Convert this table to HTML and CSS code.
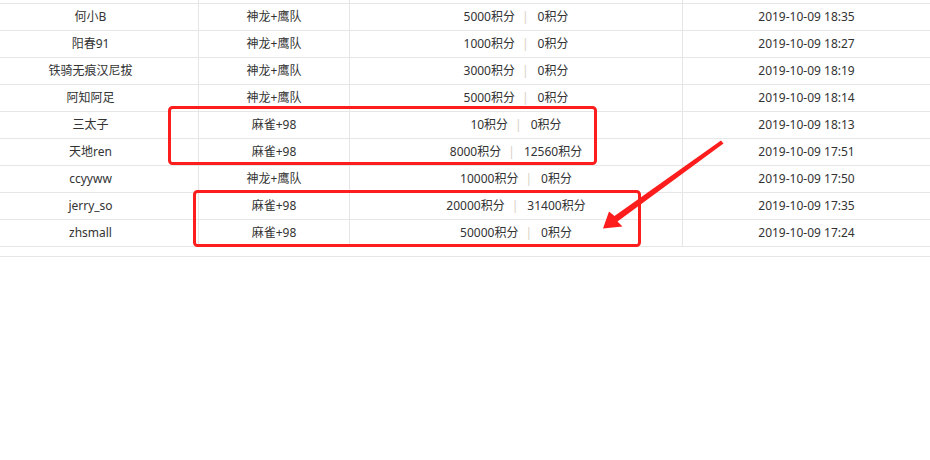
FILE: index.html
```html
<!DOCTYPE html>
<html lang="zh-CN">
<head>
    <meta charset="UTF-8">
    <meta name="viewport" content="width=device-width, initial-scale=1.0">
    <title>积分记录</title>
    <link rel="stylesheet" href="styles.css">
</head>
<body>

    <div class="records">
        <!-- previous row, scrolled out of view -->
        <div class="row">
            <div class="cell"></div>
            <div class="cell"></div>
            <div class="cell"></div>
            <div class="cell"></div>
        </div>
        <div class="row">
            <div class="cell">何小B</div>
            <div class="cell">神龙+鹰队</div>
            <div class="cell">5000积分<span class="sep">|</span>0积分</div>
            <div class="cell">2019-10-09 18:35</div>
        </div>
        <div class="row">
            <div class="cell">阳春91</div>
            <div class="cell">神龙+鹰队</div>
            <div class="cell">1000积分<span class="sep">|</span>0积分</div>
            <div class="cell">2019-10-09 18:27</div>
        </div>
        <div class="row">
            <div class="cell">铁骑无痕汉尼拔</div>
            <div class="cell">神龙+鹰队</div>
            <div class="cell">3000积分<span class="sep">|</span>0积分</div>
            <div class="cell">2019-10-09 18:19</div>
        </div>
        <div class="row">
            <div class="cell">阿知阿足</div>
            <div class="cell">神龙+鹰队</div>
            <div class="cell">5000积分<span class="sep">|</span>0积分</div>
            <div class="cell">2019-10-09 18:14</div>
        </div>
        <div class="row">
            <div class="cell">三太子</div>
            <div class="cell">麻雀+98</div>
            <div class="cell">10积分<span class="sep">|</span>0积分</div>
            <div class="cell">2019-10-09 18:13</div>
        </div>
        <div class="row">
            <div class="cell">天地ren</div>
            <div class="cell">麻雀+98</div>
            <div class="cell">8000积分<span class="sep">|</span>12560积分</div>
            <div class="cell">2019-10-09 17:51</div>
        </div>
        <div class="row">
            <div class="cell">ccyyww</div>
            <div class="cell">神龙+鹰队</div>
            <div class="cell">10000积分<span class="sep">|</span>0积分</div>
            <div class="cell">2019-10-09 17:50</div>
        </div>
        <div class="row">
            <div class="cell">jerry_so</div>
            <div class="cell">麻雀+98</div>
            <div class="cell">20000积分<span class="sep">|</span>31400积分</div>
            <div class="cell">2019-10-09 17:35</div>
        </div>
        <div class="row">
            <div class="cell">zhsmall</div>
            <div class="cell">麻雀+98</div>
            <div class="cell">50000积分<span class="sep">|</span>0积分</div>
            <div class="cell">2019-10-09 17:24</div>
        </div>
    </div>

    <div class="footer"></div>

    <!-- annotation marks drawn over the table -->
    <svg class="marks" width="930" height="460" viewBox="0 0 930 460">
        <rect x="169.5" y="107.5" width="426" height="56" rx="3" />
        <rect x="194.5" y="191.5" width="445" height="54" rx="3" />
        <polygon class="arrow" points="721,140.5 614.5,216 609,211.5 603,228.5 622.5,226.5 617.5,221.5 723.5,143.5" />
    </svg>

</body>
</html>
```

FILE: styles.css
```css
body {
    font-family: "Noto Sans", "Noto Sans CJK SC", sans-serif;
    font-size: 12px;
    color: #333;
    background-color: #fff;
    margin: 0;
    padding: 0;
    overflow: hidden;
}
.records {
    margin-top: -23px;
    margin-left: -17px;
    width: calc(100% + 17px);
}
.row {
    display: grid;
    grid-template-columns: 215px 151px 333px 1fr;
    height: 27px;
    border-bottom: 1px solid #e6e6e6;
    box-sizing: border-box;
}
.cell {
    display: flex;
    align-items: center;
    justify-content: center;
    white-space: nowrap;
    line-height: 26px;
}
.cell + .cell {
    border-left: 1px solid #e6e6e6;
}
.sep {
    color: #d8d0c4;
    margin: 0 9px 0 7px;
}
.footer {
    margin-top: 9px;
    border-top: 1px solid #e6e6e6;
}
.marks {
    position: absolute;
    top: 0;
    left: 0;
    pointer-events: none;
}
.marks rect {
    fill: none;
    stroke: #fd1d1d;
    stroke-width: 3;
}
.marks .arrow {
    fill: #fd1d1d;
}
```
